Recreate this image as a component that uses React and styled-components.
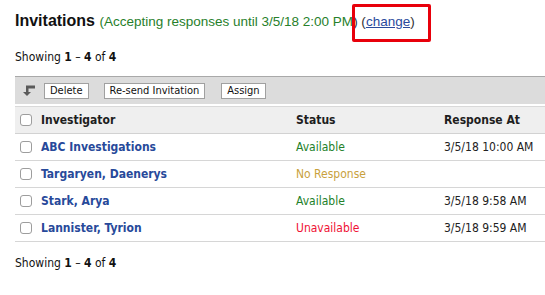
import React from 'react';
import styled, { createGlobalStyle } from 'styled-components';

const GlobalStyle = createGlobalStyle`
  html, body {
    margin: 0;
    padding: 0;
    background: #ffffff;
  }
  body {
    font-family: "DejaVu Sans Condensed", "DejaVu Sans", sans-serif;
    font-stretch: condensed;
    color: #222;
  }
`;

//#region styled-components
const Page = styled.div`
  position: relative;
  width: 545px;
  height: 295px;
  padding-left: 15px;
  box-sizing: border-box;
  overflow: hidden;
`;
const Heading = styled.h2`
  margin: 0;
  padding-top: 11px;
  height: 29px;
  font-family: "Liberation Sans", Arial, sans-serif;
  font-stretch: normal;
  font-size: 16px;
  font-weight: bold;
  color: #111;
  line-height: 19px;
`;
const Sub = styled.span`
  font-size: 13.5px;
  font-weight: normal;
  color: #333;
`;
const Green = styled.span`
  color: #27802b;
`;
const ChangeLink = styled.a`
  color: #2a4a9c;
  text-decoration: underline;
  cursor: pointer;
`;
const Highlight = styled.div`
  position: absolute;
  left: 352px;
  top: 4px;
  width: 79px;
  height: 38px;
  box-sizing: border-box;
  border: 3px solid #e8000b;
  border-radius: 2px;
`;
const Showing = styled.div`
  font-size: 12px;
  line-height: 14px;
  color: #111;
  padding: ${({ bottom }) => (bottom ? '14px 0 0' : '10px 0 12px')};
  b { font-weight: bold; }
`;
const Toolbar = styled.div`
  display: flex;
  align-items: center;
  height: 27px;
  padding-left: 7px;
  background: #dcdcdc;
  border-top: 1px solid #a9a9a9;
  margin-bottom: 2px;
`;
const ToolButton = styled.button`
  height: 16px;
  margin-left: ${({ gap }) => gap}px;
  padding: 0 ${({ pad }) => pad || 5}px;
  font-family: inherit;
  font-stretch: condensed;
  font-size: 11px;
  line-height: 14px;
  color: #111;
  background: #fff;
  border: 1px solid #a0a0a0;
  border-radius: 0;
`;
const Grid = styled.table`
  width: 530px;
  border-collapse: collapse;
  font-size: 12px;
`;
const HeadRow = styled.tr`
  background: #efefef;
  border-top: 1px solid #d9d9d9;
  border-bottom: 1px solid #d2d2d2;
  height: 27px;
`;
const Row = styled.tr`
  height: 27px;
  border-bottom: 1px solid #d6d6d6;
`;
const Th = styled.th`
  text-align: left;
  padding: 0;
  font-size: 12px;
  font-weight: bold;
  color: #1e1e1e;
  width: ${({ w }) => (w ? `${w}px` : 'auto')};
`;
const Td = styled.td`
  padding: 0;
  color: ${({ tone }) => tone || '#222'};
`;
const Box = styled.input`
  appearance: none;
  display: block;
  margin: 0 0 0 5px;
  width: 12px;
  height: 12px;
  border: 1px solid #9d9d9d;
  border-radius: 3px;
  background: #fff;
`;
const NameLink = styled.a`
  font-size: 12px;
  font-weight: bold;
  color: #27499a;
  text-decoration: none;
  cursor: pointer;
`;
//#endregion

const SortIcon = () => (
  <svg width="13" height="11" viewBox="0 0 13 11">
    <path d="M4 0.5h9v3H6.5V7h2.5L5 11 1 7h3z" fill="#5a5a5a" />
  </svg>
);

const statusTone = {
  'Available': '#23812a',
  'No Response': '#c9a13d',
  'Unavailable': '#ef1235',
};

const rows = [
  { name: 'ABC Investigations', status: 'Available', at: '3/5/18 10:00 AM' },
  { name: 'Targaryen, Daenerys', status: 'No Response', at: '' },
  { name: 'Stark, Arya', status: 'Available', at: '3/5/18 9:58 AM' },
  { name: 'Lannister, Tyrion', status: 'Unavailable', at: '3/5/18 9:59 AM' },
];

const Counter = ({ bottom }) => (
  <Showing bottom={bottom}>
    Showing <b>1</b> – <b>4</b> of <b>4</b>
  </Showing>
);

const App = () => {
  return (
    <Page>
      <GlobalStyle />
      <Heading>
        Invitations{' '}
        <Sub>
          <Green>(Accepting responses until 3/5/18 2:00 PM</Green>) (<ChangeLink>change</ChangeLink>)
        </Sub>
      </Heading>
      <Highlight />

      <Counter />

      <Toolbar>
        <SortIcon />
        <ToolButton gap={9} pad={5}>Delete</ToolButton>
        <ToolButton gap={15} pad={5}>Re-send Invitation</ToolButton>
        <ToolButton gap={16} pad={5}>Assign</ToolButton>
      </Toolbar>

      <Grid>
        <thead>
          <HeadRow>
            <Th w={26}><Box type="checkbox" /></Th>
            <Th w={255}>Investigator</Th>
            <Th w={148}>Status</Th>
            <Th>Response At</Th>
          </HeadRow>
        </thead>
        <tbody>
          {rows.map((r) => (
            <Row key={r.name}>
              <Td><Box type="checkbox" /></Td>
              <Td><NameLink>{r.name}</NameLink></Td>
              <Td tone={statusTone[r.status]}>{r.status}</Td>
              <Td>{r.at}</Td>
            </Row>
          ))}
        </tbody>
      </Grid>

      <Counter bottom />
    </Page>
  );
};

export default App;
